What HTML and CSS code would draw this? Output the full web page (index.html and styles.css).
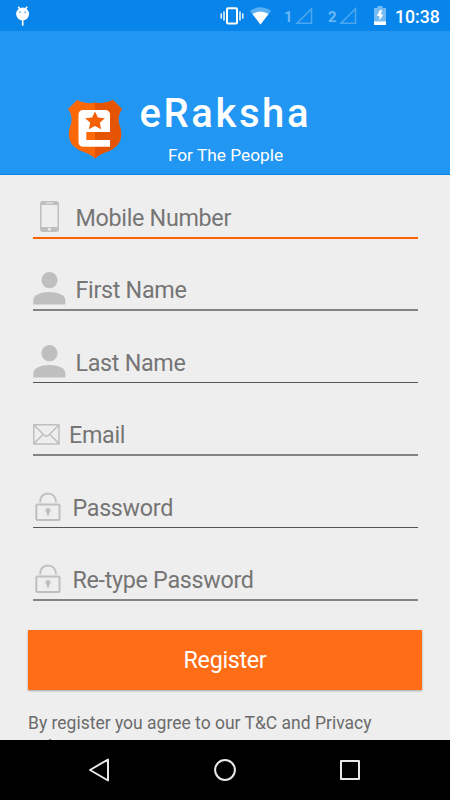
FILE: index.html
```html
<!DOCTYPE html>
<html lang="en">
<head>
<meta charset="utf-8">
<title>eRaksha</title>
<link rel="stylesheet" href="styles.css">
</head>
<body>
<svg width="0" height="0" class="defs">
  <symbol id="person" viewBox="0 0 33 33"><circle cx="16.5" cy="8.2" r="8.1"/><path d="M.3 32.5V28C.3 23 8 20 16.3 20s16 3 16 8v4.500z"/></symbol>
  <symbol id="lock" viewBox="0 0 26 30"><g fill="none" stroke="currentColor" stroke-width="2"><rect x="1.300" y="12.400" width="23.200" height="15.600" rx="1"/><path d="M5 10.500C5 4.500 8.500 1.600 13 1.600s8 3 8 8.900"/></g><path d="M13 16a2.700 2.700 0 0 1 1.300 5v2.600h-2.600V21A2.700 2.700 0 0 1 13 16z"/></symbol>
</svg>
<div class="screen">
  <div class="status">
    <svg class="droid" width="16" height="22" viewBox="0 0 16 22"><path d="M3.200 1.700l2 2.500M12.200 1.700l-2 2.500M7.700 14.500v6.300" stroke="#fff" stroke-width="1.600"/><circle cx="7.600" cy="9" r="6.500" fill="#fff"/><path d="M4.300 7.300h1.500M9.500 7.300H11" stroke="#4aa7ef" stroke-width="1.500"/></svg>
    <svg class="vibrate" width="24" height="18" viewBox="0 0 24 18"><rect x="7" y="1.200" width="10" height="15.200" rx="1" fill="none" stroke="#fff" stroke-width="2"/><path d="M4 4.500v9M20 4.500v9M1.200 6.500v5M22.800 6.500v5" stroke="#e4f2fd" stroke-width="1.600"/></svg>
    <svg class="wifi" width="21" height="18" viewBox="0 0 21 18"><path d="M0 4Q10.500-3.500 21 4L10.500 17.500z" fill="#5ab0f4"/><path d="M2.500 7Q10.500 2 18.500 7L10.500 17.500z" fill="#fff"/></svg>
    <span class="sim sim-one">1</span>
    <svg class="signal" width="18" height="18" viewBox="0 0 18 18"><path d="M16.500 1.800V16.300H2z" fill="none" stroke="#4aa7f0" stroke-width="1.600"/></svg>
    <span class="sim sim-two">2</span>
    <svg class="signal" width="18" height="18" viewBox="0 0 18 18"><path d="M16.500 1.800V16.300H2z" fill="none" stroke="#4aa7f0" stroke-width="1.600"/></svg>
    <svg class="battery" width="12" height="19" viewBox="0 0 12 19"><path d="M0 2h3.500V0h5v2H12v17H0z" fill="#75bcf5"/><path d="M0 15.500h12V19H0zM6 4L2.800 10h2.700v4.500L9.300 8.400H6.800L8 4z" fill="#fff"/></svg>
    <span class="clock">10:38</span>
  </div>
  <header class="header">
    <svg class="shield" width="54" height="59" viewBox="0 0 54 59">
      <path d="M9 0Q18 5 27 2.500Q36 5 45 0L54 9Q49 16 51 24C57 39 50 47 41 51Q32 53.500 27 58.500Q22 53.500 13 51C4 47-3 39 3 24Q5 16 0 9z" fill="#fb6808"/>
      <path d="M27 2.500Q36 5 45 0L54 9Q49 16 51 24C57 39 50 47 41 51Q32 53.500 27 58.500z" fill="#e45403"/>
      <path d="M15 10H37.500a4.500 4.500 0 0 1 4.500 4.500V32H18.300v8H42v6.700H15a4.500 4.500 0 0 1-4.500-4.500V14.500A4.500 4.500 0 0 1 15 10z" fill="#fff"/>
      <path d="M27 11.500l2.900 5.900 6.900.8-5 4.500 1.400 6.600-6.200-3.200-6.200 3.200 1.400-6.600-5-4.500 6.900-.8z" fill="#f46005"/>
    </svg>
    <div class="brand"><h1>eRaksha</h1><p>For The People</p></div>
  </header>
  <main class="content">
    <form class="form">
      <div class="field active phone"><svg width="19" height="32" viewBox="0 0 19 32"><path fill-rule="evenodd" d="M3 0h13a3 3 0 0 1 3 3v25a3 3 0 0 1-3 3H3a3 3 0 0 1-3-3V3a3 3 0 0 1 3-3zM1.500 4v22h16V4zM6 1.500v1h7v-1zM9.500 26.800a1.500 1.500 0 1 0 .01 0z"/></svg><span>Mobile Number</span></div>
      <div class="field soft person"><svg width="33" height="33"><use href="#person"/></svg><span>First Name</span></div>
      <div class="field person"><svg width="33" height="33"><use href="#person"/></svg><span>Last Name</span></div>
      <div class="field soft mail"><svg width="27" height="21" viewBox="0 0 27 21"><path d="M.8.800h25.200v19.100H.8zM1 1l10 10q2.400 2.300 4.800 0L26 1M1 19.600l9.300-9.300M26 19.600l-9.300-9.300" fill="none" stroke="currentColor" stroke-width="1.500"/></svg><span>Email</span></div>
      <div class="field lock"><svg width="26" height="30"><use href="#lock"/></svg><span>Password</span></div>
      <div class="field soft lock"><svg width="26" height="30"><use href="#lock"/></svg><span>Re-type Password</span></div>
    </form>
    <div class="register">Register</div>
    <p class="terms">By register you agree to our T&amp;C and Privacy<br>policies.</p>
  </main>
  <nav class="nav">
    <svg width="22" height="26" viewBox="0 0 22 26"><path d="M20 2.500v21L2 13z"/></svg>
    <svg width="22" height="22" viewBox="0 0 22 22"><circle cx="11" cy="11" r="9.900"/></svg>
    <svg width="20" height="20" viewBox="0 0 20 20"><rect x="1" y="1" width="18" height="18"/></svg>
  </nav>
</div>
</body>
</html>
```
FILE: styles.css
```css
* { box-sizing: border-box; }
body { margin: 0; font-family: Roboto, sans-serif; }
h1, p { margin: 0; font-weight: 400; }
svg { display: block; flex: none; }
.defs { position: absolute; }
.screen { width: 450px; height: 800px; display: flex; flex-direction: column; overflow: hidden; background: #eee; }
.status { height: 31px; flex: none; background: #0785ea; display: flex; align-items: center; color: #fff; }
.droid { margin-left: 15px; }
.vibrate { margin-left: 189px; }
.wifi { margin-left: 6px; }
.sim { color: #6bb8f5; font-size: 15px; font-weight: 700; line-height: 20px; padding-top: 2px; width: 10px; }
.sim-one { margin-left: 13px; }
.sim-two { margin-left: 15px; }
.signal { margin-left: 1px; }
.battery { margin-left: 17px; }
.clock { margin-left: 9px; font-size: 17.7px; font-weight: 500; line-height: 22px; padding-top: 2px; }
.header { height: 144px; flex: none; background: #2196f3; border-bottom: 1px solid #0785ea; display: flex; color: #fff; }
.shield { margin: 69px 0 0 67.5px; }
.brand { margin: 59px 0 0 18px; width: 172px; }
.brand h1 { font-size: 40px; line-height: 48px; font-weight: 500; letter-spacing: 2.6px; white-space: nowrap; }
.brand p { font-size: 17.3px; line-height: 20px; margin-top: 7px; text-align: center; }
.content { flex: 1; min-height: 0; overflow: hidden; padding: 0 28px; }
.form { display: grid; grid-template-rows: 64px 72px 72px 73px 72px 73px; padding: 0 4.5px; }
.field { display: flex; align-items: flex-end; border-bottom: 1px solid #555; color: #bfbfbf; width: 385px; }
.field svg { fill: currentColor; }
.field span { font-size: 23.3px; line-height: 28px; letter-spacing: -.3px; color: #757575; margin-bottom: 5px; white-space: nowrap; }
.soft { border-bottom: 2px solid #838383; }
.active { border-bottom: 2px solid #ff6200; }
.phone svg { margin: 0 17px 4px 7px; }
.person svg { margin: 0 10px 4px 0; }
.mail svg { margin: 0 9.5px 9px 0; }
.lock svg { margin: 0 12px 5px 2px; }
.register { height: 60px; margin-top: 29px; background: #ff6d16; color: #fff; font-size: 23.3px; letter-spacing: -.3px; line-height: 61px; text-align: center; box-shadow: 0 1px 2px rgba(0,0,0,.3); }
.terms { margin-top: 21px; font-size: 17.5px; line-height: 24px; color: #6b6b6b; white-space: nowrap; }
.nav { height: 60px; flex: none; background: #000; display: flex; align-items: center; justify-content: space-between; padding: 0 90px 0 88px; }
.nav svg { fill: none; stroke: #e8e8e8; stroke-width: 2; stroke-linejoin: round; }
```
